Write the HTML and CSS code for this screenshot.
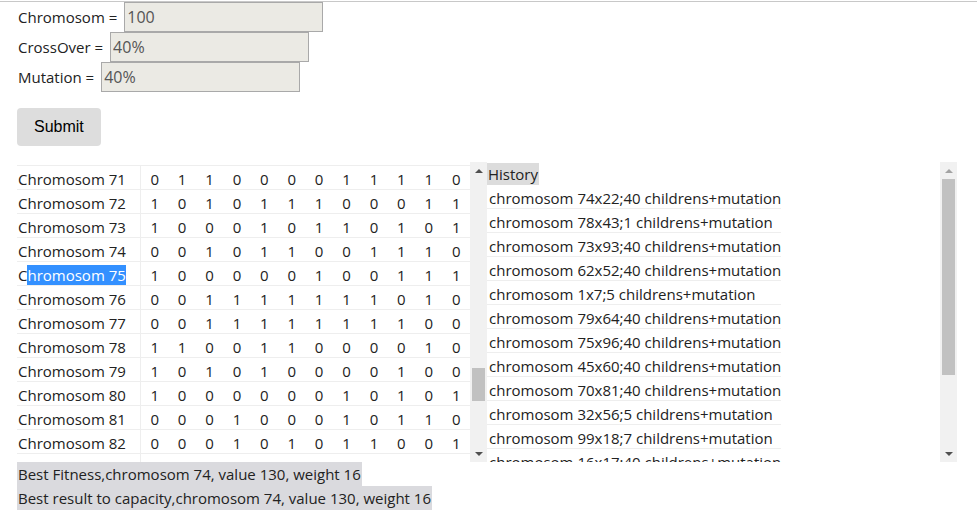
FILE: index.html
```html
<!DOCTYPE html>
<html>
<head>
<meta charset="utf-8">
<title>Genetic knapsack</title>
<link rel="stylesheet" href="styles.css">
</head>
<body>
<form class="params">
  <div class="field"><label class="lbl">Chromosom =</label><input class="inp" value="100"></div>
  <div class="field"><label class="lbl">CrossOver =</label><input class="inp" value="40%"></div>
  <div class="field"><label class="lbl">Mutation =</label><input class="inp" value="40%"></div>
  <button class="submit" type="button">Submit</button>
</form>

<div class="panels">
  <div class="panel">
    <div class="viewport genes-view">
      <table class="genes">
        <tr><td class="name">Chromosom 71</td><td>0</td><td>1</td><td>1</td><td>0</td><td>0</td><td>0</td><td>0</td><td>1</td><td>1</td><td>1</td><td>1</td><td>0</td></tr>
        <tr><td class="name">Chromosom 72</td><td>1</td><td>0</td><td>1</td><td>0</td><td>1</td><td>1</td><td>1</td><td>0</td><td>0</td><td>0</td><td>1</td><td>1</td></tr>
        <tr><td class="name">Chromosom 73</td><td>1</td><td>0</td><td>0</td><td>0</td><td>1</td><td>0</td><td>1</td><td>1</td><td>0</td><td>1</td><td>0</td><td>1</td></tr>
        <tr><td class="name">Chromosom 74</td><td>0</td><td>0</td><td>1</td><td>0</td><td>1</td><td>1</td><td>0</td><td>0</td><td>1</td><td>1</td><td>1</td><td>0</td></tr>
        <tr><td class="name">C<span class="sel">hromosom 75</span></td><td>1</td><td>0</td><td>0</td><td>0</td><td>0</td><td>0</td><td>1</td><td>0</td><td>0</td><td>1</td><td>1</td><td>1</td></tr>
        <tr><td class="name">Chromosom 76</td><td>0</td><td>0</td><td>1</td><td>1</td><td>1</td><td>1</td><td>1</td><td>1</td><td>1</td><td>0</td><td>1</td><td>0</td></tr>
        <tr><td class="name">Chromosom 77</td><td>0</td><td>0</td><td>1</td><td>1</td><td>1</td><td>1</td><td>1</td><td>1</td><td>1</td><td>1</td><td>0</td><td>0</td></tr>
        <tr><td class="name">Chromosom 78</td><td>1</td><td>1</td><td>0</td><td>0</td><td>1</td><td>1</td><td>0</td><td>0</td><td>0</td><td>0</td><td>1</td><td>0</td></tr>
        <tr><td class="name">Chromosom 79</td><td>1</td><td>0</td><td>1</td><td>0</td><td>1</td><td>0</td><td>0</td><td>0</td><td>0</td><td>1</td><td>0</td><td>0</td></tr>
        <tr><td class="name">Chromosom 80</td><td>1</td><td>0</td><td>0</td><td>0</td><td>0</td><td>0</td><td>0</td><td>1</td><td>0</td><td>1</td><td>0</td><td>1</td></tr>
        <tr><td class="name">Chromosom 81</td><td>0</td><td>0</td><td>0</td><td>1</td><td>0</td><td>0</td><td>0</td><td>1</td><td>0</td><td>1</td><td>1</td><td>0</td></tr>
        <tr><td class="name">Chromosom 82</td><td>0</td><td>0</td><td>0</td><td>1</td><td>0</td><td>1</td><td>0</td><td>1</td><td>1</td><td>0</td><td>0</td><td>1</td></tr>
        <tr><td class="name">Chromosom 83</td><td>1</td><td>1</td><td>1</td><td>0</td><td>0</td><td>1</td><td>0</td><td>1</td><td>0</td><td>0</td><td>1</td><td>1</td></tr>
      </table>
    </div>
    <div class="sbar">
      <div class="arrow up"></div>
      <div class="track"><div class="thumb thumb-left"></div></div>
      <div class="arrow down"></div>
    </div>
  </div>

  <div class="panel">
    <div class="viewport">
      <div class="hist">
        <span class="hist-head">History</span>
        <div class="hist-item">chromosom 74x22;40 childrens+mutation</div>
        <div class="hist-item">chromosom 78x43;1 childrens+mutation</div>
        <div class="hist-item">chromosom 73x93;40 childrens+mutation</div>
        <div class="hist-item">chromosom 62x52;40 childrens+mutation</div>
        <div class="hist-item">chromosom 1x7;5 childrens+mutation</div>
        <div class="hist-item">chromosom 79x64;40 childrens+mutation</div>
        <div class="hist-item">chromosom 75x96;40 childrens+mutation</div>
        <div class="hist-item">chromosom 45x60;40 childrens+mutation</div>
        <div class="hist-item">chromosom 70x81;40 childrens+mutation</div>
        <div class="hist-item">chromosom 32x56;5 childrens+mutation</div>
        <div class="hist-item">chromosom 99x18;7 childrens+mutation</div>
        <div class="hist-item">chromosom 16x17;40 childrens+mutation</div>
      </div>
    </div>
    <div class="sbar">
      <div class="arrow up disabled"></div>
      <div class="track"><div class="thumb thumb-right"></div></div>
      <div class="arrow down"></div>
    </div>
  </div>
</div>

<div class="results">
  <div class="best">Best Fitness,chromosom 74, value 130, weight 16</div>
  <div class="best">Best result to capacity,chromosom 74, value 130, weight 16</div>
</div>
</body>
</html>
```
FILE: styles.css
```css
html {
  background: #fff;
}
body {
  margin: 1px 0 0 0;
  padding: 0 0 0 17px;
  border-top: 1px solid #c8c8c8;
  font-family: "Open Sans", "Noto Sans", sans-serif;
  font-size: 15px;
  color: #222;
}

.params {
  display: flex;
  flex-direction: column;
  align-items: flex-start;
  margin: 0;
}
.field {
  display: flex;
  align-items: center;
  height: 30px;
}
.lbl {
  padding-left: 1px;
  margin-right: 7px;
}
.inp {
  box-sizing: border-box;
  width: 199px;
  height: 30px;
  margin: 0;
  padding: 1px 2px;
  border: 1px solid #a9a9a9;
  background: #ebeae4;
  color: #555;
  font-family: "Open Sans", "Noto Sans", sans-serif;
  font-size: 16px;
}
.submit {
  margin-top: 16px;
  height: 38px;
  padding: 0 17px;
  border: none;
  border-radius: 4px;
  background: #dddddd;
  color: #000;
  font-family: "Liberation Sans", Arial, sans-serif;
  font-size: 16px;
}

.panels {
  display: flex;
  margin-top: 16px;
}
.panel {
  display: flex;
  width: 470px;
  height: 300px;
}
.viewport {
  flex: 1;
  overflow: hidden;
}
.genes-view {
  padding-top: 3px;
}
.genes {
  width: 453px;
  table-layout: fixed;
  border-collapse: separate;
  border-spacing: 0;
}
.genes td {
  padding: 4px 0 0 0;
  height: 19px;
  line-height: 19px;
  text-align: center;
  border-bottom: 1px solid #eeeeee;
  white-space: nowrap;
}
.genes tr:first-child td {
  border-top: 1px solid #eeeeee;
}
.genes td.name {
  width: 122px;
  padding-left: 1px;
  text-align: left;
  border-right: 1px solid #eeeeee;
}
.sel {
  background: #3390ff;
  color: #fff;
}

.hist {
  display: inline-block;
  padding-top: 1px;
}
.hist-head {
  display: inline-block;
  line-height: 22px;
  padding: 0 1px;
  background: #dcdcdc;
}
.hist-item {
  padding: 4px 0 0 2px;
  line-height: 19px;
  border-bottom: 1px solid #eeeeee;
  white-space: nowrap;
}

.sbar {
  width: 17px;
  background: #f1f1f1;
  display: flex;
  flex-direction: column;
}
.arrow {
  height: 17px;
  display: flex;
  align-items: center;
  justify-content: center;
}
.arrow::before {
  content: "";
  border-left: 4px solid transparent;
  border-right: 4px solid transparent;
}
.up::before {
  border-bottom: 4px solid #505050;
}
.down::before {
  border-top: 4px solid #505050;
}
.up.disabled::before {
  border-bottom-color: #a3a3a3;
}
.track {
  flex: 1;
  padding: 0 2px;
}
.thumb {
  background: #c1c1c1;
}
.thumb-left {
  margin-top: 189px;
  height: 33px;
}
.thumb-right {
  height: 196px;
}

.results {
  display: flex;
  flex-direction: column;
  align-items: flex-start;
}
.best {
  line-height: 24px;
  padding: 0 1px;
  background: #dadade;
}
```
